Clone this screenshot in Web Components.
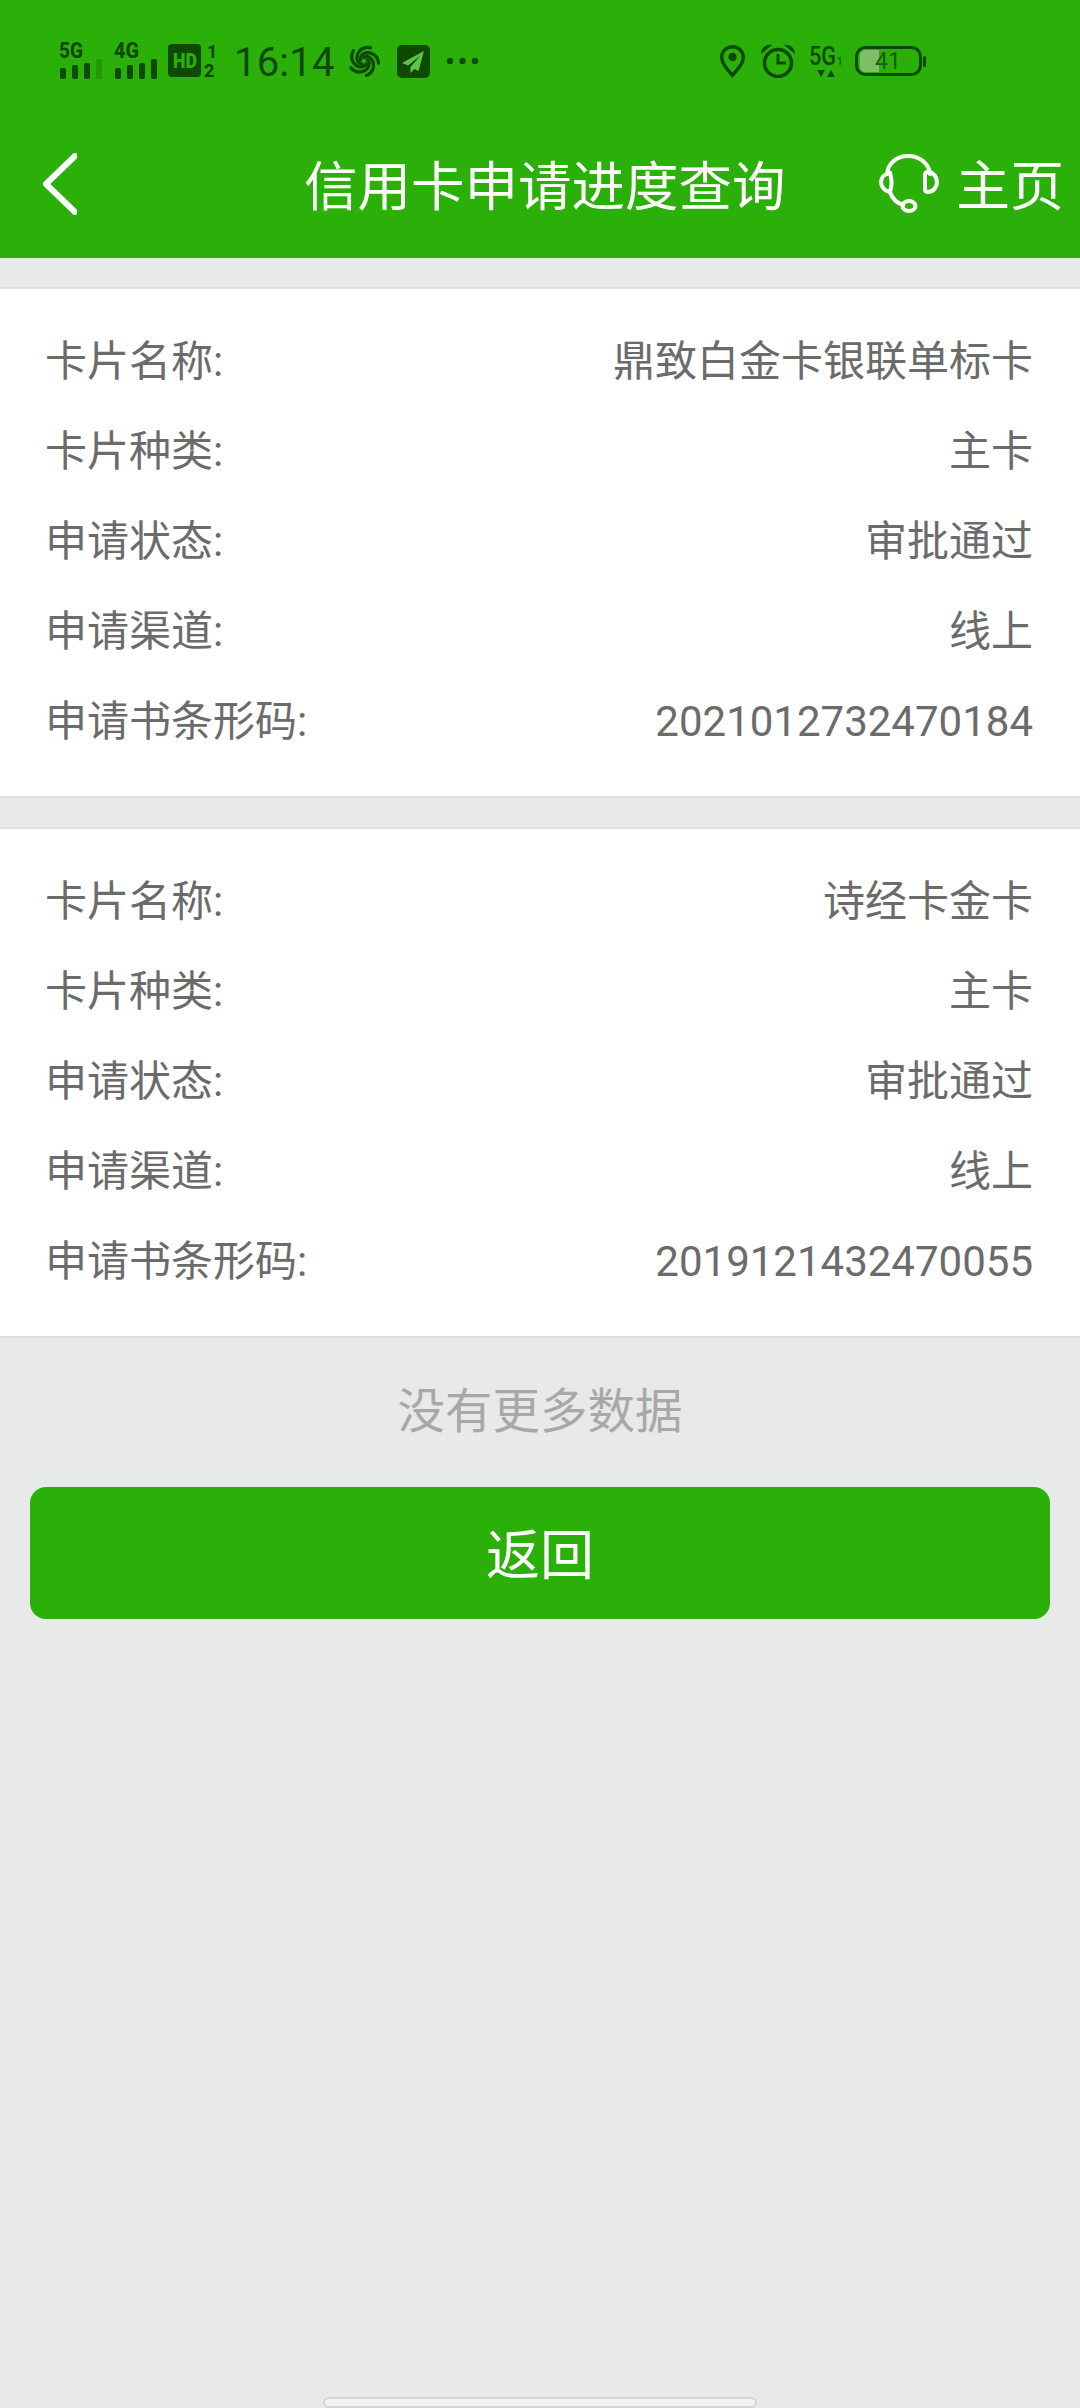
<!DOCTYPE html>
<html lang="zh-CN">
<head>
<meta charset="utf-8">
<title>信用卡申请进度查询</title>
<style>
  html, body { margin: 0; padding: 0; }
  body {
    width: 1080px;
    height: 2408px;
    overflow: hidden;
    background: #e8e9e9;
    font-family: Roboto, "Noto Sans CJK SC", sans-serif;
  }
</style>
</head>
<body>
<app-header title-text="信用卡申请进度查询" action-text="主页"></app-header>
<apply-card name="鼎致白金卡银联单标卡" code="2021012732470184"></apply-card>
<apply-card name="诗经卡金卡" code="2019121432470055"></apply-card>
<end-note>没有更多数据</end-note>
<green-button>返回</green-button>
<home-bar></home-bar>

<script>
class StatusBar extends HTMLElement {
  constructor() {
    super();
    this.attachShadow({ mode: "open" });
    const arm = "M0 -3.500C5 -6 10 -1 9.500 5.500 9 10 6 13 2.500 14.500";
    this.shadowRoot.innerHTML = `
    <style>
      :host {
        display: flex;
        align-items: center;
        height: 122px;
        padding-left: 59px;
        color: #0f4a05;
      }
      svg { display: block; flex: none; fill: currentColor; }
      .g { font: 800 22px Roboto, sans-serif; }
      .time { font: 400 40px/1 Roboto, sans-serif; margin: 4px 13px 0 18px; letter-spacing: 0.2px; }
    </style>
    <svg width="43" height="44" viewBox="0 -4 43 44" style="margin-right:12px">
      <text class="g" x="0" y="15" textLength="24" lengthAdjust="spacingAndGlyphs">5G</text>
      <rect x="1" y="25" width="6" height="11" rx="2"/>
      <rect x="13" y="22" width="6" height="14" rx="2"/>
      <rect x="25" y="20" width="6" height="16" rx="2"/>
      <rect x="37" y="16" width="6" height="20" rx="2" opacity=".25"/>
    </svg>
    <svg width="43" height="44" viewBox="0 -4 43 44" style="margin-right:11px">
      <text class="g" x="0" y="15" textLength="25" lengthAdjust="spacingAndGlyphs">4G</text>
      <rect x="1" y="25" width="6" height="11" rx="2"/>
      <rect x="13" y="22" width="6" height="14" rx="2"/>
      <rect x="25" y="20" width="6" height="16" rx="2"/>
      <rect x="37" y="16" width="6" height="20" rx="2"/>
    </svg>
    <svg width="48" height="44" viewBox="0 -4 48 44">
      <rect x="0" y="1" width="33" height="33" rx="4"/>
      <text x="5" y="25" font-family="Roboto" font-weight="900" font-size="20" fill="#2bb009" textLength="24" lengthAdjust="spacingAndGlyphs">HD</text>
      <text x="39" y="15" font-family="Roboto" font-weight="800" font-size="18">1</text>
      <text x="36" y="34" font-family="Roboto" font-weight="800" font-size="18">2</text>
    </svg>
    <span class="time">16:14</span>
    <svg width="32" height="32" viewBox="-16 -16 32 32" style="margin-right:17px;fill:none;stroke:currentColor;stroke-linecap:round;stroke-width:3.300">
      <path d="${arm}"/>
      <path transform="rotate(72)" d="${arm}"/>
      <path transform="rotate(144)" d="${arm}"/>
      <path transform="rotate(216)" d="${arm}"/>
      <path transform="rotate(288)" d="${arm}"/>
    </svg>
    <svg width="33" height="33" viewBox="0 0 33 33" style="margin-right:16px">
      <rect width="33" height="33" rx="5"/>
      <path fill="#5fc24a" d="M27 6 5 18l6 2.500L23 11 13.500 22v6l4-4 4 2z"/>
    </svg>
    <svg width="33" height="8" viewBox="0 0 33 8">
      <circle cx="4" cy="4" r="3.200"/><circle cx="16.500" cy="4" r="3.200"/><circle cx="29" cy="4" r="3.200"/>
    </svg>
    <svg width="25" height="33" viewBox="0 0 25 33" style="margin-left:241px;margin-right:16px">
      <path fill-rule="evenodd" d="M12.500 0C5.600 0 0 5.400 0 12.300 0 20 7.500 27 12.500 33 17.500 27 25 20 25 12.300 25 5.400 19.400 0 12.500 0Zm0 3.500c5 0 9 3.900 9 8.800 0 5.400-5 10.700-9 15.400-4-4.700-9-10-9-15.400 0-4.900 4-8.800 9-8.800Z"/>
      <circle cx="12.500" cy="12" r="4.200"/>
    </svg>
    <svg width="34" height="34" viewBox="0 0 34 34" style="margin-right:14px">
      <path d="M0 10C0 4 5 0 11 1ZM34 10C34 4 29 0 23 1Z"/>
      <circle cx="17" cy="19" r="13.500" fill="none" stroke="currentColor" stroke-width="3.600"/>
      <path d="M15.500 10h3V17.500H25v3H15.500z"/>
    </svg>
    <svg width="33" height="44" viewBox="0 -6 33 44" style="margin-right:13px">
      <text x="0" y="20" font-family="Roboto" font-weight="500" font-size="25" textLength="27" lengthAdjust="spacingAndGlyphs">5G</text>
      <text x="28" y="20" font-family="Roboto" font-size="10">1</text>
      <path d="M8 25h8l-4 7zM18 32h8l-4-7z"/>
    </svg>
    <svg width="71" height="30" viewBox="0 0 71 30">
      <rect x="1.500" y="1.500" width="64" height="27" rx="9" fill="none" stroke="currentColor" stroke-width="3"/>
      <path d="M5 9a5 5 0 0 1 5-5H24V26H10a5 5 0 0 1-5-5Z" fill="#7fbf6a"/>
      <rect x="68" y="10" width="3" height="11" rx="1.500"/>
      <text x="33" y="23" text-anchor="middle" font-family="Roboto" font-size="23" fill="#1e5a12">41</text>
    </svg>`;
  }
}

class NavRow extends HTMLElement {
  constructor() {
    super();
    this.attachShadow({ mode: "open" });
  }

  connectedCallback() {
    this.shadowRoot.innerHTML = `
    <style>
      :host {
        display: flex;
        align-items: center;
        height: 124px;
        padding: 0 16px 12px 42px;
        color: #fff;
      }
      svg { display: block; flex: none; }
      .title {
        font-size: 53.5px;
        line-height: 1;
        margin-left: 227px;
        padding-top: 7px;
        white-space: nowrap;
      }
      .action {
        display: flex;
        align-items: center;
        gap: 17px;
        margin-left: auto;
        font-size: 54px;
        line-height: 1;
        white-space: nowrap;
      }
      .action span { padding-top: 7px; }
    </style>
    <svg width="35" height="62" viewBox="0 0 35 62">
      <path d="M33 3 4 31l29 28" fill="none" stroke="#fff" stroke-width="6" stroke-linecap="round" stroke-linejoin="round"/>
    </svg>
    <span class="title">${this.getAttribute("title-text")}</span>
    <div class="action">
      <svg width="60" height="60" viewBox="0 0 60 60" fill="none" stroke="#fff" stroke-width="4" stroke-linecap="round">
        <path d="M8 20C9 9 18 2 29 2s21 7 22 18"/>
        <path d="M11 19C5 20 2 24 2 28s3 9 9 10c2-6 2-13 0-19Z"/>
        <path d="M49 18C55 18 58 24 58 28s-3 10-9 10c-2 0-3-1-3-3V21c0-2 1-3 3-3Z"/>
        <path d="M11 38c2 6 7 11 13 13"/>
        <ellipse cx="30" cy="52" rx="6.500" ry="5"/>
      </svg>
      <span>${this.getAttribute("label")}</span>
    </div>`;
  }
}

class AppHeader extends HTMLElement {
  constructor() {
    super();
    this.attachShadow({ mode: "open" });
  }

  connectedCallback() {
    this.shadowRoot.innerHTML = `
    <style>
      :host {
        display: block;
        height: 258px;
        margin-bottom: 1px;
        background: #2bb009;
      }
    </style>
    <status-bar></status-bar>
    <nav-row title-text="${this.getAttribute("title-text")}" label="${this.getAttribute("action-text")}"></nav-row>`;
  }
}

class InfoRow extends HTMLElement {
  constructor() {
    super();
    this.attachShadow({ mode: "open" });
  }

  connectedCallback() {
    const value = this.getAttribute("value");
    const isCode = /^\d+$/.test(value);
    this.shadowRoot.innerHTML = `
    <style>
      :host {
        display: flex;
        justify-content: space-between;
        align-items: center;
        height: 90px;
        padding: 0 47px 0 45px;
        font-size: 42px;
        color: #6b6b6b;
        white-space: nowrap;
      }
      /* cjk glyphs sit low on the roboto baseline */
      span { padding-bottom: 8px; }
      .code { padding-bottom: 0; }
    </style>
    <span>${this.getAttribute("label")}:</span>
    <span class="${isCode ? "code" : ""}">${value}</span>`;
  }
}

class ApplyCard extends HTMLElement {
  constructor() {
    super();
    this.attachShadow({ mode: "open" });
  }

  connectedCallback() {
    const rows = [
      ["卡片名称", this.getAttribute("name")],
      ["卡片种类", "主卡"],
      ["申请状态", "审批通过"],
      ["申请渠道", "线上"],
      ["申请书条形码", this.getAttribute("code")],
    ];
    this.shadowRoot.innerHTML = `
    <style>
      :host {
        display: block;
        margin-top: 29px;
        padding: 27px 0 30px;
        background: #fff;
        border-top: 2px solid #dfe0e0;
        border-bottom: 2px solid #dfe0e0;
      }
    </style>
    ${rows.map(([label, value]) => `<info-row label="${label}" value="${value}"></info-row>`).join("")}`;
  }
}

class EndNote extends HTMLElement {
  constructor() {
    super();
    this.attachShadow({ mode: "open" });
    this.shadowRoot.innerHTML = `
    <style>
      :host {
        display: block;
        height: 149px;
        line-height: 149px;
        text-align: center;
        font-size: 47.5px;
        color: #a8a8a8;
      }
    </style>
    <slot></slot>`;
  }
}

class GreenButton extends HTMLElement {
  constructor() {
    super();
    this.attachShadow({ mode: "open" });
    this.shadowRoot.innerHTML = `
    <style>
      :host {
        display: flex;
        align-items: center;
        justify-content: center;
        box-sizing: border-box;
        height: 132px;
        margin: 0 30px;
        padding-bottom: 4px;
        border-radius: 16px;
        background: #2bb009;
        color: #fff;
        font-size: 54px;
      }
    </style>
    <slot></slot>`;
  }
}

class HomeBar extends HTMLElement {
  constructor() {
    super();
    this.attachShadow({ mode: "open" });
    this.shadowRoot.innerHTML = `
    <style>
      :host {
        display: block;
        position: absolute;
        left: 323px;
        top: 2397px;
        width: 434px;
        height: 11px;
        box-sizing: border-box;
        background: #f0f1f1;
        border: 2px solid #d4d6d6;
        border-radius: 6px;
      }
    </style>`;
  }
}

customElements.define("status-bar", StatusBar);
customElements.define("nav-row", NavRow);
customElements.define("app-header", AppHeader);
customElements.define("info-row", InfoRow);
customElements.define("apply-card", ApplyCard);
customElements.define("end-note", EndNote);
customElements.define("green-button", GreenButton);
customElements.define("home-bar", HomeBar);
</script>
</body>
</html>
